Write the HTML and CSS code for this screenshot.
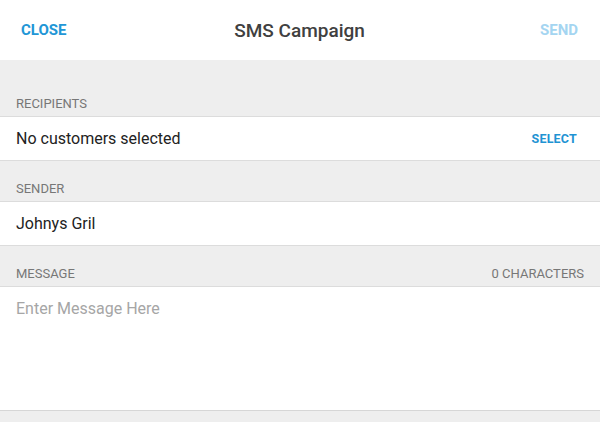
FILE: index.html
```html
<!DOCTYPE html>
<html>
<head>
<meta charset="utf-8">
<link rel="stylesheet" href="styles.css">
</head>
<body>
<div class="screen">
  <header class="topbar">
    <span class="action action-close">CLOSE</span>
    <h1 class="title">SMS Campaign</h1>
    <span class="action action-send">SEND</span>
  </header>
  <div class="section-label first"><span>RECIPIENTS</span></div>
  <div class="row">
    <span class="row-text">No customers selected</span>
    <span class="row-action">SELECT</span>
  </div>
  <div class="section-label"><span>SENDER</span></div>
  <div class="row">
    <span class="row-text">Johnys Gril</span>
  </div>
  <div class="section-label"><span>MESSAGE</span><span>0 CHARACTERS</span></div>
  <div class="message">
    <span class="placeholder">Enter Message Here</span>
  </div>
</div>
</body>
</html>
```
FILE: styles.css
```css
* { box-sizing: border-box; }
html, body { margin: 0; padding: 0; }
body {
  background: #eeeeee;
  font-family: Roboto, "Noto Sans", sans-serif;
  width: 600px;
  height: 422px;
  overflow: hidden;
}
.screen { display: flex; flex-direction: column; }
.topbar {
  height: 60px;
  background: #ffffff;
  display: flex;
  align-items: center;
  justify-content: space-between;
  padding: 0 22px 0 21px;
}
.title {
  margin: 0;
  font-size: 19px;
  font-weight: 500;
  color: #404040;
}
.action {
  font-size: 15px;
  font-weight: 700;
  width: 70px;
}
.action-close { color: #2196d6; }
.action-send { color: #a4d5f1; text-align: right; }
.section-label {
  height: 40px;
  padding: 0 16px 5px 16px;
  display: flex;
  align-items: flex-end;
  justify-content: space-between;
  font-size: 13px;
  line-height: 15px;
  color: #777777;
}
.section-label.first { height: 56px; }
.row {
  height: 45px;
  background: #ffffff;
  border-top: 1px solid #dcdcdc;
  border-bottom: 1px solid #dcdcdc;
  display: flex;
  align-items: center;
  justify-content: space-between;
  padding: 0 23px 0 16px;
}
.row-text { font-size: 16px; color: #222222; }
.row-action {
  font-size: 12.5px;
  font-weight: 700;
  color: #1f93d3;
  letter-spacing: 0.2px;
}
.message {
  height: 125px;
  background: #ffffff;
  border-top: 1px solid #dcdcdc;
  border-bottom: 1px solid #d6d6d6;
  padding: 12px 16px;
}
.placeholder {
  font-size: 16px;
  line-height: 20px;
  color: #a6a6a6;
}
```
